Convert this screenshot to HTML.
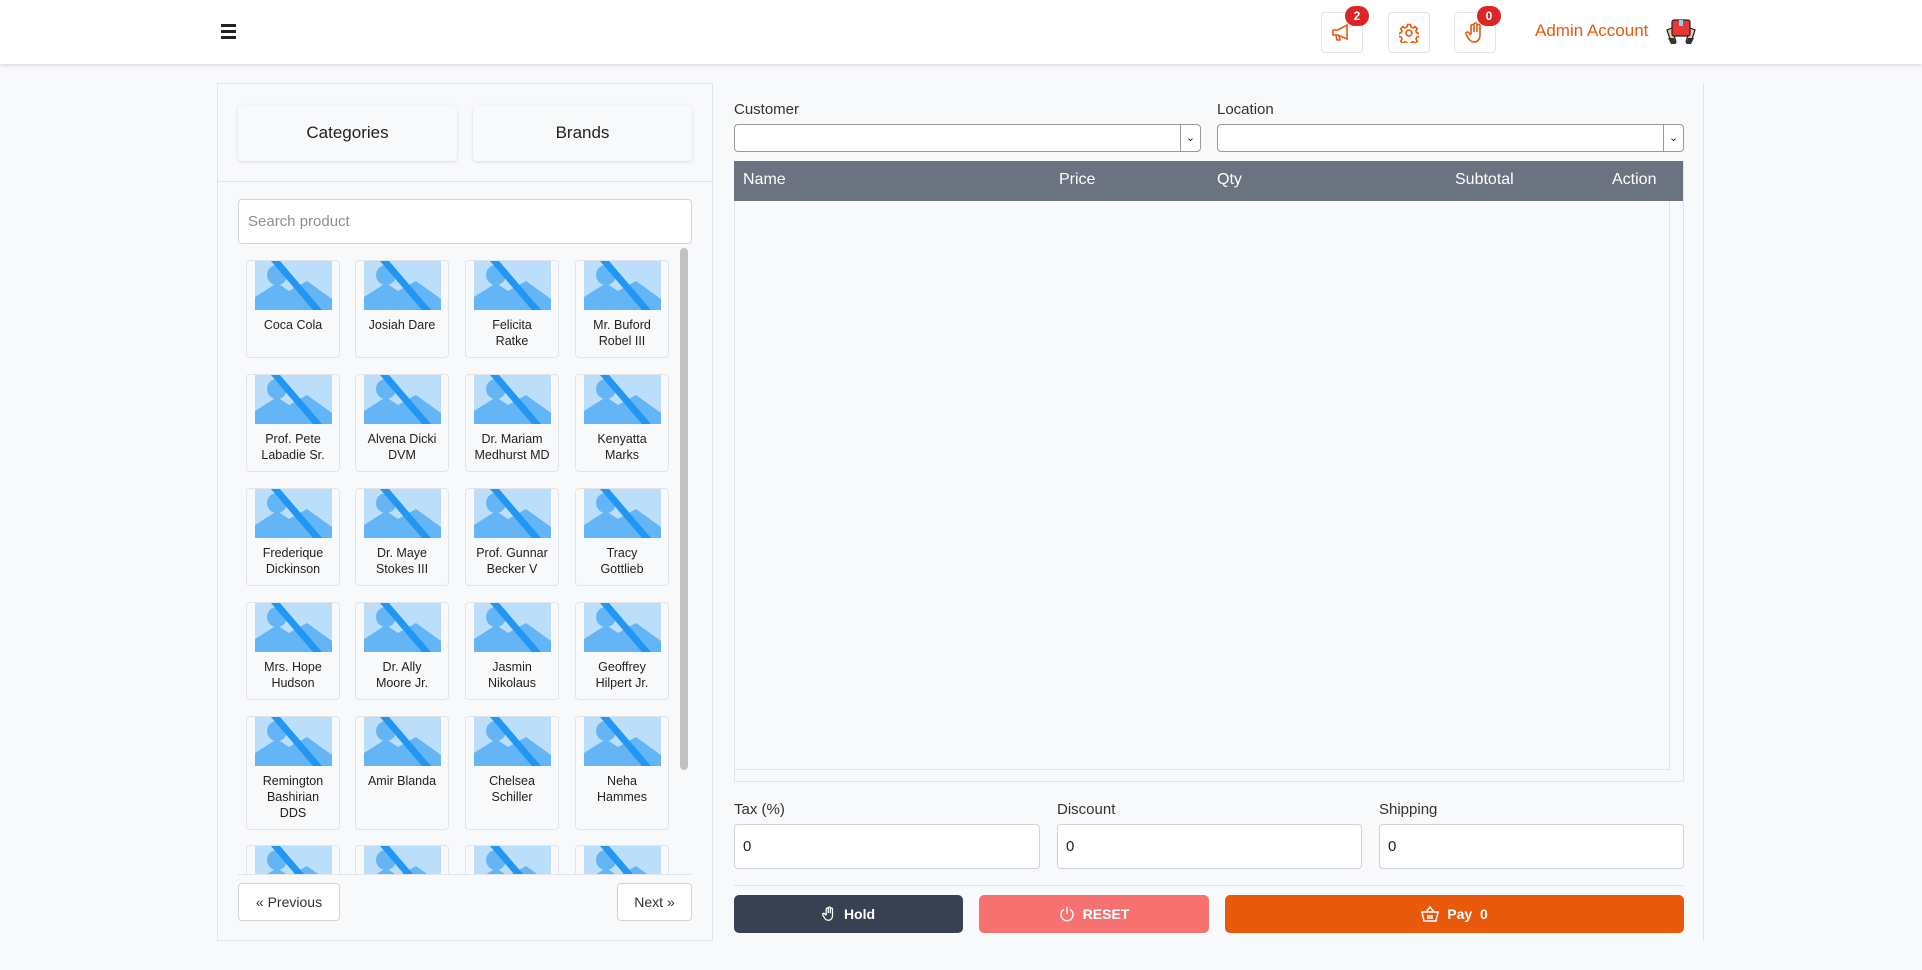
<!DOCTYPE html>
<html><head><meta charset="utf-8"><style>
*{box-sizing:border-box;margin:0;padding:0}
body{width:1922px;height:970px;background:#f8f9fb;font-family:"Liberation Sans",sans-serif;position:relative;overflow:hidden;color:#222}
.a{position:absolute}
.hdr{left:0;top:0;width:1922px;height:64px;background:#fff;box-shadow:0 1px 4px rgba(0,0,0,.15)}
.ib{width:42px;height:41px;border:1px solid #e3e4e8;border-radius:4px;background:#fff;top:12px;display:flex;align-items:center;justify-content:center}
.badge{background:#dc2626;color:#fff;font-size:12px;font-weight:bold;border-radius:10px;width:24px;height:20px;text-align:center;line-height:20px;top:6px}
.btn{background:#f8f9fb;border-radius:4px;box-shadow:0 1px 3px rgba(0,0,0,.12);display:flex;align-items:center;justify-content:center;font-size:17px;color:#222}
.card{width:94px;height:98px;border:1px solid #e3e4e8;border-radius:4px;background:#f8f9fb;overflow:hidden}
.card svg{position:absolute;left:8px;top:0}
.card div{position:absolute;top:56px;left:0;width:100%;text-align:center;font-size:12.5px;line-height:16px;color:#222}
.inp{background:#fff;border:1px solid #cfd3da;border-radius:4px}
.lbl{font-size:15px;color:#333}
.th{color:#fff;font-size:16px;top:171px}
.bt{top:895px;height:38px;border-radius:5px;color:#fff;font-size:14px;font-weight:bold;display:flex;align-items:center;justify-content:center;gap:8px}
</style></head><body>
<div class="a hdr"></div>
<div class="a" style="left:221px;top:24px;width:15px;height:2.5px;background:#222;box-shadow:0 6px 0 #222,0 12px 0 #222"></div>
<div class="a ib" style="left:1321px"><svg width="22" height="20" viewBox="0 0 22 20" fill="none" stroke="#e8590c" stroke-width="1.6"><path d="M2 7h5l9-5v14l-9-4H2z M5 12l1 5h3l-1-5"/></svg></div>
<div class="a badge" style="left:1345px">2</div>
<div class="a ib" style="left:1388px"><svg width="20" height="20" viewBox="0 0 20 20" fill="none" stroke="#e8590c" stroke-width="1.6"><circle cx="10" cy="10" r="3"/><path d="M8.5 1.5h3l.5 2.5 2 1 2.2-1.4 2.1 2.1-1.4 2.2 1 2 2.5.5v3l-2.5.5-1 2 1.4 2.2-2.1 2.1-2.2-1.4-2 1-.5 2.5h-3l-.5-2.5-2-1-2.2 1.4-2.1-2.1 1.4-2.2-1-2-2.5-.5v-3l2.5-.5 1-2-1.4-2.2 2.1-2.1 2.2 1.4 2-1z"/></svg></div>
<div class="a ib" style="left:1454px"><svg width="20" height="22" viewBox="0 0 20 22" fill="none" stroke="#e8590c" stroke-width="1.6"><path d="M6 12V4a1.5 1.5 0 013 0v6V2.5a1.5 1.5 0 013 0V10V4a1.5 1.5 0 013 0v9c0 5-3 7-6 7s-5-2-7-6l-1-2a1.5 1.5 0 012.5-1.5L6 13"/></svg></div>
<div class="a badge" style="left:1477px">0</div>
<div class="a" style="left:1535px;top:21px;font-size:17px;color:#e8590c">Admin Account</div>
<svg class="a" style="left:1665px;top:16px" width="32" height="30" viewBox="0 0 32 30"><path d="M2 14l4 12h5l-4-14z M30 14l-4 12h-5l4-14z" fill="#f1c9a0" stroke="#222" stroke-width="1.2"/><rect x="7" y="4" width="18" height="16" rx="2" fill="#e53935" stroke="#222" stroke-width="1.2"/><rect x="14" y="4" width="4" height="6" fill="#90caf9"/><path d="M3 22l3 6h5l-2-6z M29 22l-3 6h-5l2-6z" fill="#333"/></svg>

<div class="a" style="left:217px;top:83px;width:496px;height:858px;border:1px solid #e3e4e8;background:#f8f9fb"></div>
<div class="a btn" style="left:238px;top:105px;width:219px;height:56px">Categories</div>
<div class="a btn" style="left:473px;top:105px;width:219px;height:56px">Brands</div>
<div class="a" style="left:218px;top:181px;width:494px;height:1px;background:#e3e4e8"></div>
<div class="a inp" style="left:238px;top:199px;width:454px;height:45px;border-color:#cfd3da"></div>
<div class="a" style="left:248px;top:213px;font-size:15px;color:#8a8f98">Search product</div>
<div class="a" style="left:238px;top:244px;width:440px;height:630px;overflow:hidden" id="g"></div>
<div class="a" style="left:680px;top:248px;width:8px;height:522px;background:#c1c1c1;border-radius:4px"></div>
<div class="a" style="left:238px;top:874px;width:454px;height:1px;background:#e3e4e8"></div>
<div class="a inp" style="left:238px;top:883px;width:102px;height:38px;display:flex;align-items:center;justify-content:center;font-size:14px;color:#333">« Previous</div>
<div class="a inp" style="left:617px;top:883px;width:75px;height:38px;display:flex;align-items:center;justify-content:center;font-size:14px;color:#333">Next »</div>

<div class="a" style="left:1703px;top:83px;width:1px;height:858px;background:#e3e4e8"></div>
<div class="a lbl" style="left:734px;top:101px">Customer</div>
<div class="a inp" style="left:734px;top:124px;width:467px;height:28px;border-color:#999"></div>
<div class="a" style="left:1180px;top:125px;width:20px;height:26px;border-left:1px solid #999;font-size:11px;text-align:center;line-height:26px">⌄</div>
<div class="a lbl" style="left:1217px;top:101px">Location</div>
<div class="a inp" style="left:1217px;top:124px;width:467px;height:28px;border-color:#999"></div>
<div class="a" style="left:1663px;top:125px;width:20px;height:26px;border-left:1px solid #999;font-size:11px;text-align:center;line-height:26px">⌄</div>
<div class="a" style="left:734px;top:161px;width:950px;height:621px;border:1px solid #e3e4e8"></div>
<div class="a" style="left:734px;top:161px;width:949px;height:40px;background:#6b7280"></div>
<div class="a th" style="left:743px">Name</div><div class="a th" style="left:1059px">Price</div><div class="a th" style="left:1217px">Qty</div><div class="a th" style="left:1455px">Subtotal</div><div class="a th" style="left:1612px">Action</div>
<div class="a" style="left:734px;top:201px;width:936px;height:569px;border-right:1px solid #e3e4e8;border-bottom:1px solid #e3e4e8"></div>
<div class="a lbl" style="left:734px;top:801px">Tax (%)</div>
<div class="a lbl" style="left:1057px;top:801px">Discount</div>
<div class="a lbl" style="left:1379px;top:801px">Shipping</div>
<div class="a inp" style="left:734px;top:824px;width:306px;height:45px;padding:13px 8px;font-size:15px">0</div>
<div class="a inp" style="left:1057px;top:824px;width:305px;height:45px;padding:13px 8px;font-size:15px">0</div>
<div class="a inp" style="left:1379px;top:824px;width:305px;height:45px;padding:13px 8px;font-size:15px">0</div>
<div class="a" style="left:734px;top:885px;width:950px;height:1px;background:#e3e4e8"></div>
<div class="a bt" style="left:734px;width:229px;background:#374151"><svg width="14" height="18" viewBox="0 0 20 22" fill="none" stroke="#fff" stroke-width="1.8"><path d="M6 12V4a1.5 1.5 0 013 0v6V2.5a1.5 1.5 0 013 0V10V4a1.5 1.5 0 013 0v9c0 5-3 7-6 7s-5-2-7-6l-1-2a1.5 1.5 0 012.5-1.5L6 13"/></svg>Hold</div>
<div class="a bt" style="left:979px;width:230px;background:#f87171"><svg width="16" height="16" viewBox="0 0 16 16" fill="none" stroke="#fff" stroke-width="1.5"><path d="M5 3.5a6 6 0 106 0M8 1v7"/></svg>RESET</div>
<div class="a bt" style="left:1225px;width:459px;background:#e8590c"><svg width="18" height="16" viewBox="0 0 18 16" fill="none" stroke="#fff" stroke-width="1.5"><path d="M1 6h16l-2 9H3z M5 6l4-5 4 5 M7 9v4M9 9v4M11 9v4"/></svg>Pay&nbsp; 0</div>
<script>
var n=["Coca Cola","Josiah Dare","Felicita<br>Ratke","Mr. Buford<br>Robel III","Prof. Pete<br>Labadie Sr.","Alvena Dicki<br>DVM","Dr. Mariam<br>Medhurst MD","Kenyatta<br>Marks","Frederique<br>Dickinson","Dr. Maye<br>Stokes III","Prof. Gunnar<br>Becker V","Tracy<br>Gottlieb","Mrs. Hope<br>Hudson","Dr. Ally<br>Moore Jr.","Jasmin<br>Nikolaus","Geoffrey<br>Hilpert Jr.","Remington<br>Bashirian<br>DDS","Amir Blanda","Chelsea<br>Schiller","Neha<br>Hammes","","","",""];
var xs=[8,117,227,337],ys=[16,130,244,358,472,601],h="";
var img='<svg width="77" height="49" viewBox="0 0 77 49"><rect width="77" height="49" fill="#bbdefb"/><circle cx="22" cy="14" r="10" fill="#64b5f6"/><path d="M0 49V36l22-14 12 8 18-10 25 18v11z" fill="#64b5f6"/><path d="M16 0h9l42 49h-9z" fill="#2196f3"/></svg>';
for(var i=0;i<24;i++){var r=Math.floor(i/4),c=i%4;h+='<div class="a card" style="left:'+xs[c]+'px;top:'+ys[r]+'px;'+(r==4?'height:114px':'')+'">'+img+'<div>'+n[i]+'</div></div>';}
document.getElementById('g').innerHTML=h;
</script>
</body></html>
